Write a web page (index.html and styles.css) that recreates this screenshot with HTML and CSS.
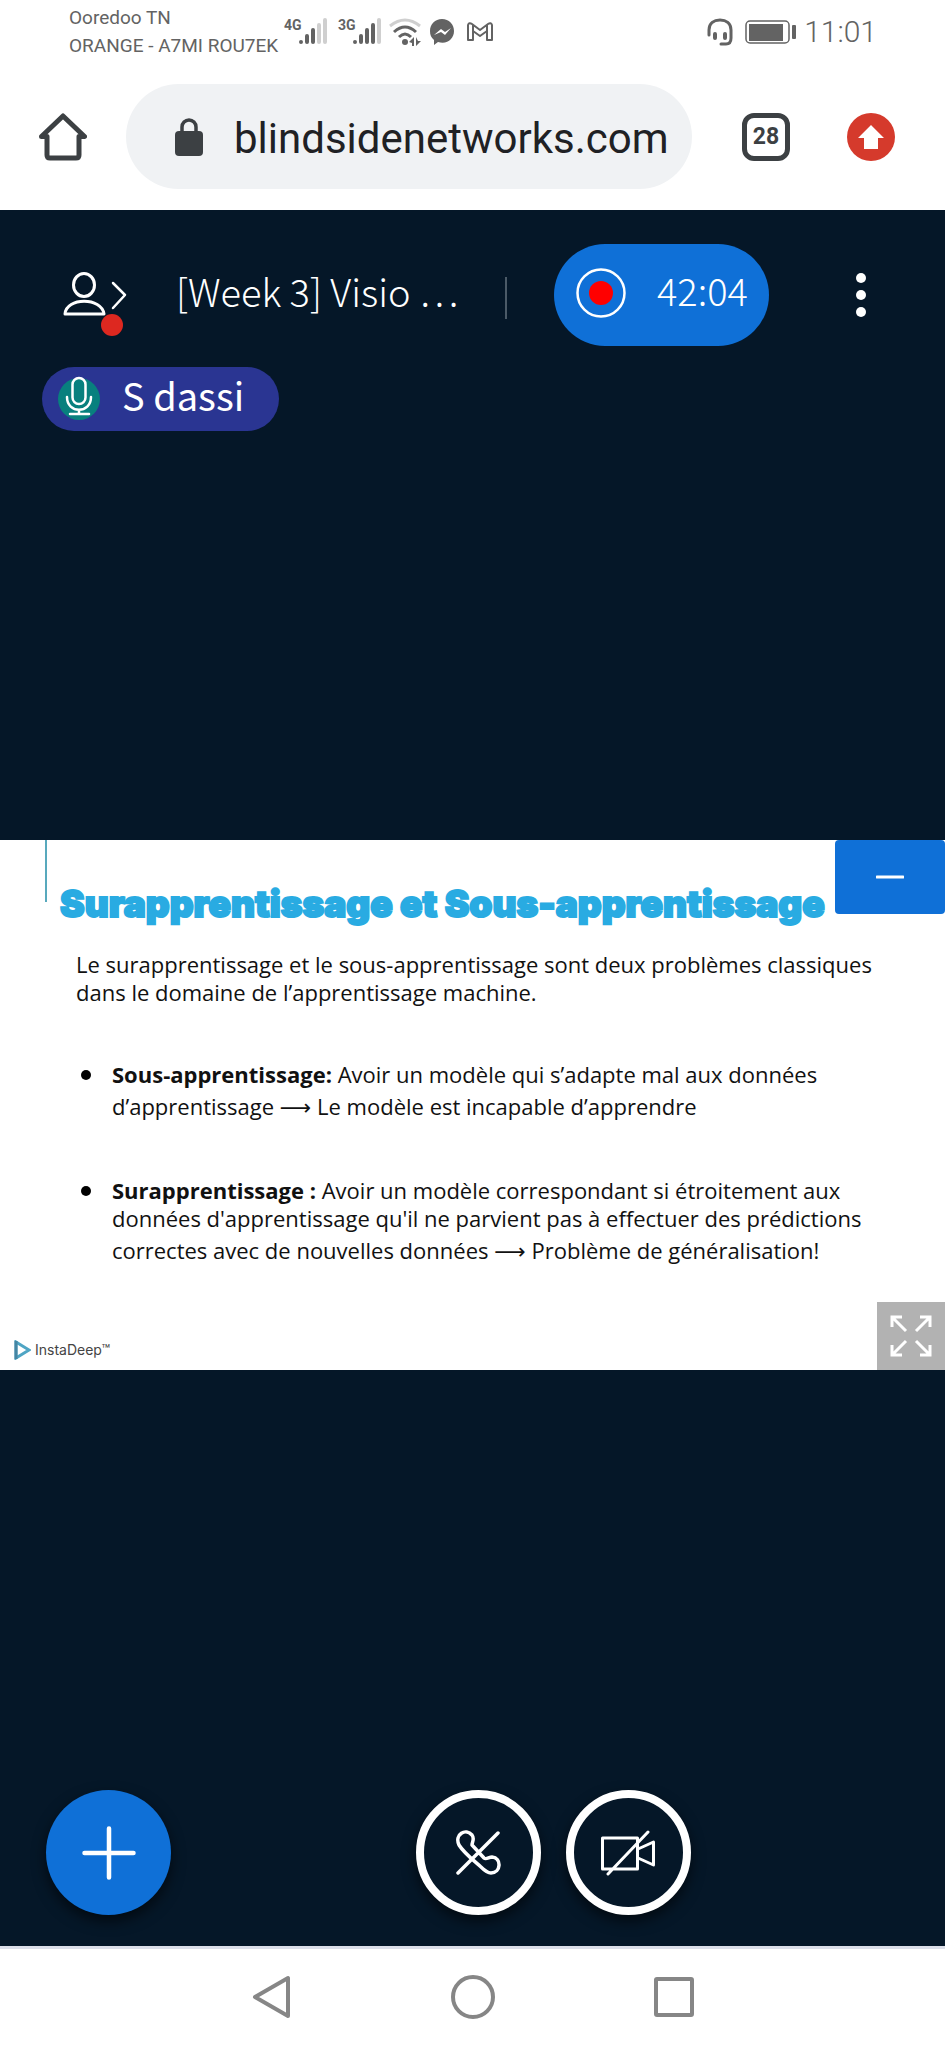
FILE: index.html
```html
<!DOCTYPE html>
<html lang="fr">
<head>
<meta charset="utf-8">
<meta name="viewport" content="width=device-width, initial-scale=1">
<title>[Week 3] Visio</title>
<link rel="stylesheet" href="styles.css">
</head>
<body>
<div class="status">
  <div class="carriers"><span>Ooredoo TN</span><span>ORANGE - A7MI ROU7EK</span></div>
  <div class="signals">
    <span class="net">4G</span>
    <svg class="bars" width="28" height="28" viewBox="0 0 28 28" aria-hidden="true"><g stroke-width="4" stroke-linecap="round" stroke="#636363"><path d="M2 24v0M8 18v6M14 12v12"/><path stroke="#cfcfcf" d="M20 7v17M26 2v22"/></g></svg>
    <span class="net second">3G</span>
    <svg class="bars" width="28" height="28" viewBox="0 0 28 28" aria-hidden="true"><g stroke-width="4" stroke-linecap="round" stroke="#636363"><path d="M2 24v0M8 18v6M14 12v12M20 7v17"/><path stroke="#cfcfcf" d="M26 2v22"/></g></svg>
    <svg class="wifi" width="32" height="28" viewBox="0 0 32 28" fill="none" stroke="#636363" stroke-width="3" aria-hidden="true"><path stroke="#cfcfcf" d="M1 8Q16-4 31 8"/><path d="M5 14Q16 4 27 14M10 19Q16 13 22 19"/><circle cx="16" cy="24" r="3" fill="#636363" stroke="none"/><path fill="#636363" stroke="none" d="M20 24l5-5v9h-2v-3zM27 19v9l5-5h-3z"/></svg>
    <svg class="msgr" width="26" height="26" viewBox="0 0 26 26" aria-hidden="true"><path fill="#636363" d="M13 0C6 0 1 5 1 12c0 4 1 6 4 9v5l4-3c9 3 16-3 16-11C25 5 20 0 13 0z"/><path d="M5 16l7-6 4 3 6-4-6 7-4-3z" fill="#fff"/></svg>
    <svg class="gmail" width="26" height="20" viewBox="0 0 26 20" fill="none" stroke="#636363" stroke-width="2" stroke-linejoin="round" aria-hidden="true"><path d="M1 18V3q1-3 4-1l8 6 8-6q3-2 4 1v15h-5V9l-7 5-7-5v9zM6 9V3M20 9V3"/></svg>
  </div>
  <div class="right-status">
    <svg width="26" height="28" viewBox="0 0 26 28" fill="none" stroke="#636363" stroke-width="3" stroke-linecap="round" aria-hidden="true"><path d="M2 17v-5C2 5 7 2 13 2s11 3 11 10v8c0 4-2 6-5 6h-5"/><path stroke-width="4" d="M8 16v4M18 16v4"/></svg>
    <svg class="battery" width="51" height="24" viewBox="0 0 51 24" aria-hidden="true"><rect x="1" y="1" width="43" height="22" rx="4" fill="none" stroke="#636363" stroke-width="1.5"/><path fill="#636363" d="M4 4h34v17H4z"/><rect x="47" y="5" width="4" height="14" rx="1" fill="#636363"/></svg>
    <time>11:01</time>
  </div>
</div>

<header class="browser">
  <button class="plain" aria-label="Accueil"><svg width="48" height="48" viewBox="0 0 48 48" fill="none" stroke="#3c4043" stroke-width="5" stroke-linejoin="round" stroke-linecap="round"><path d="M2.500 23.500L24 3l21.500 20.500H40V42q0 3-3 3H11q-3 0-3-3V23.500z"/></svg></button>
  <label class="omnibox">
    <svg width="28" height="38" viewBox="0 0 28 38" aria-hidden="true"><rect y="13" width="28" height="25" rx="4" fill="#3c4043"/><path d="M7 15V9a7 7 0 0114 0v6" fill="none" stroke="#3c4043" stroke-width="3.500"/></svg>
    <input type="text" value="blindsidenetworks.com" aria-label="Adresse">
  </label>
  <button class="tabs" aria-label="28 onglets">28</button>
  <button class="plain" aria-label="Mettre à jour"><svg width="48" height="48" viewBox="0 0 48 48"><circle cx="24" cy="24" r="24" fill="#d53a2c"/><path fill="#fff" d="M24 12l13 13h-6v11H17V25h-6z"/></svg></button>
</header>

<main class="meeting">
  <div class="topbar">
    <button class="plain users" aria-label="Participants"><svg width="66" height="48" viewBox="0 0 66 48" fill="none" stroke="#fff" stroke-width="3" stroke-linecap="round" stroke-linejoin="round"><ellipse cx="22" cy="14" rx="10.500" ry="11.500"/><path d="M3 43c1-17 37-17 39 0z"/><path stroke-width="2.500" d="M51 12l12 12-12 13"/></svg><span class="badge"></span></button>
    <h1 class="title">[Week 3] Visio …</h1>
    <span class="divider"></span>
    <button class="record"><svg width="50" height="50" viewBox="0 0 50 50" aria-hidden="true"><circle cx="25" cy="25" r="23.500" fill="none" stroke="#fff" stroke-width="2.500"/><circle cx="25" cy="25" r="12" fill="#f00"/></svg><span class="label">42:04</span></button>
    <button class="plain more" aria-label="Options"><svg width="10" height="44" viewBox="0 0 10 44" fill="#fff"><circle cx="5" cy="5" r="5"/><circle cx="5" cy="22" r="5"/><circle cx="5" cy="39" r="5"/></svg></button>
  </div>
  <button class="talker"><svg width="42" height="44" viewBox="0 0 42 44" fill="none" stroke="#fff" stroke-width="2.500" stroke-linecap="round" aria-hidden="true"><circle cx="21" cy="23" r="21" fill="#08807e" stroke="none"/><rect x="14.500" y="2" width="13" height="26" rx="6.500"/><path d="M9 21c0 17 24 17 24 0M21 34v4M12 38h19"/></svg><span class="label">S dassi</span></button>

  <div class="stage">
    <section class="slide">
      <span class="rule"></span>
      <h2>Surapprentissage et Sous-apprentissage</h2>
      <p>Le surapprentissage et le sous-apprentissage sont deux problèmes classiques<br>dans le domaine de l’apprentissage machine.</p>
      <ul>
        <li><b>Sous-apprentissage:</b> Avoir un modèle qui s’adapte mal aux données<br>d’apprentissage <span class="arrow">⟶</span> Le modèle est incapable d’apprendre</li>
        <li><b>Surapprentissage :</b> Avoir un modèle correspondant si étroitement aux<br>données d'apprentissage qu'il ne parvient pas à effectuer des prédictions<br>correctes avec de nouvelles données <span class="arrow">⟶</span> Problème de généralisation!</li>
      </ul>
      <div class="brand"><svg width="17" height="20" viewBox="0 0 17 20" aria-hidden="true"><path d="M2 2l13 8-13 8z" fill="none" stroke="#4fa5c4" stroke-width="3"/><path d="M2 1v18" stroke="#4585a3" stroke-width="3"/></svg>InstaDeep™</div>
      <button class="minimize" aria-label="Réduire la présentation"><svg width="28" height="4" viewBox="0 0 28 4"><path d="M1 2h26" stroke="#fff" stroke-width="3" stroke-linecap="round"/></svg></button>
      <button class="fullscreen" aria-label="Plein écran"><svg width="42" height="42" viewBox="0 0 42 42" fill="none" stroke="#fff" stroke-width="3"><path d="M16 16L2 2M2 12V2h10M26 16L40 2M30 2h10v10M16 26L2 40M2 30v10h10M26 26l14 14M30 40h10V30"/></svg></button>
    </section>
  </div>

  <div class="actions">
    <button class="round add" aria-label="Actions"><svg width="54" height="54" viewBox="0 0 54 54" stroke="#fff" stroke-width="4.500" stroke-linecap="round"><path d="M27 2.500v49M2.500 27h49"/></svg></button>
    <div class="center">
      <button class="round ring" aria-label="Rejoindre l’audio"><svg width="46" height="46" viewBox="0 0 46 46" fill="none" stroke="#fff" stroke-width="3.500" stroke-linecap="round" stroke-linejoin="round"><path d="M43 3L3 43M4 15C-1 4 11-2 17 5c3 4 0 7 0 10l12 13c2 2 5-1 8-1 10 1 9 16-1 16-4 0-7-3-10-6C17 29 9 23 4 15z"/></svg></button>
      <button class="round ring" aria-label="Partager la webcam"><svg width="56" height="46" viewBox="0 0 56 46" fill="none" stroke="#fff" stroke-width="3" stroke-linecap="round" stroke-linejoin="round"><path d="M2.500 8h35v31h-35zM38 19l15.500-7v23L38 28M48 2L8 44"/></svg></button>
    </div>
  </div>
</main>

<nav class="system">
  <button class="plain" aria-label="Retour"><svg width="44" height="44" viewBox="0 0 44 44"><path d="M5 22L38 3v38z"/></svg></button>
  <button class="plain" aria-label="Écran d’accueil"><svg width="44" height="44" viewBox="0 0 44 44"><circle cx="22" cy="22" r="20"/></svg></button>
  <button class="plain" aria-label="Applications récentes"><svg width="44" height="44" viewBox="0 0 44 44"><rect x="4" y="4" width="36" height="36" rx="1"/></svg></button>
</nav>
</body>
</html>
```
FILE: styles.css
```css
* { box-sizing: border-box; }
body {
  margin: 0;
  min-height: 100vh;
  display: flex;
  flex-direction: column;
  background: #fff;
  font-family: Roboto, "Liberation Sans", sans-serif;
}
svg { display: block; flex: none; }
button { font: inherit; color: inherit; border: 0; padding: 0; cursor: pointer; }
.plain { background: none; }

.status {
  display: flex;
  align-items: center;
  height: 64px;
  padding: 0 68px 0 69px;
  color: #636363;
}
.carriers { display: flex; flex-direction: column; font-size: 19px; line-height: 28px; width: 215px; white-space: nowrap; font-weight: 400; }
.signals { display: flex; align-items: center; }
.net { width: 15px; font-size: 14px; line-height: 14px; font-weight: 700; align-self: flex-start; white-space: nowrap; }
.second { margin-left: 11px; }
.wifi { margin-left: 8px; }
.msgr { margin-left: 8px; }
.gmail { margin-left: 12px; }
.right-status { display: flex; align-items: center; margin-left: auto; font-size: 30px; line-height: 36px; font-weight: 300; }
.battery { margin: 0 8px 0 12px; }

.browser { display: flex; align-items: center; padding: 20px 50px 21px 39px; }
.omnibox {
  flex: 1;
  min-width: 0;
  display: flex;
  align-items: center;
  gap: 31px;
  height: 105px;
  margin: 0 50px 0 39px;
  padding: 0 24px 0 49px;
  border-radius: 53px;
  background: #f0f2f4;
}
.omnibox input {
  flex: 1;
  min-width: 0;
  border: 0;
  padding: 4px 0 0;
  outline: 0;
  background: none;
  font: 42px/52px Roboto, sans-serif;
  color: #202124;
}
.tabs {
  width: 48px;
  height: 48px;
  margin-right: 57px;
  border: 5px solid #3c4043;
  border-radius: 12px;
  background: #fff;
  color: #3c4043;
  font-size: 23px;
  line-height: 38px;
  font-weight: 700;
}

.meeting {
  flex: 1;
  display: flex;
  flex-direction: column;
  background: #051728;
  color: #fff;
  font-family: "Noto Sans CJK SC", "Noto Sans", sans-serif;
}
.topbar { display: flex; align-items: center; padding: 34px 79px 0 62px; }
.users { position: relative; }
.badge {
  position: absolute;
  left: 39px;
  bottom: -17px;
  width: 22px;
  height: 22px;
  border-radius: 50%;
  background: #dd2820;
}
.title { flex: 1; margin: 0 0 0 48px; padding-bottom: 8px; font-size: 38px; line-height: 48px; font-weight: 300; white-space: nowrap; }
.label { padding-bottom: 6px; line-height: 48px; }
.divider { width: 2px; height: 42px; margin: 6px 47px 0 0; background: #4b5a67; }
.record {
  display: flex;
  align-items: center;
  gap: 31px;
  height: 102px;
  width: 215px;
  padding: 0 0 4px 22px;
  border-radius: 51px;
  background: #0f70d7;
  font-size: 38px;
  font-weight: 300;
}
.more { margin-left: 87px; }
.talker {
  align-self: flex-start;
  display: flex;
  align-items: center;
  gap: 22px;
  height: 64px;
  margin: 21px 0 0 42px;
  padding: 0 35px 3px 16px;
  border-radius: 32px;
  background: #2a3592;
  font-size: 38px;
}

.stage { flex: 1; display: flex; flex-direction: column; justify-content: center; }
.slide {
  position: relative;
  padding: 44px 60px 10px;
  background: #fff;
  color: #111;
  font-family: "Open Sans", "Noto Sans", sans-serif;
  font-size: 22px;
  line-height: 28px;
}
.rule { position: absolute; left: 45px; top: 0; width: 2px; height: 62px; background: #58a9bd; }
.slide h2 {
  margin: 0;
  font: 900 37px/40px Inter, sans-serif;
  color: #29abe2;
  -webkit-text-stroke: 2px #29abe2;
  white-space: nowrap;
}
.slide p { margin: 26px 0 0 16px; white-space: nowrap; }
.slide ul { margin: 0; padding: 0 0 0 52px; list-style: none; white-space: nowrap; }
.slide li { position: relative; margin-top: 54px; }
.slide li + li { margin-top: 48px; }
.slide li::before {
  content: "";
  position: absolute;
  left: -31px;
  top: 10px;
  width: 10px;
  height: 10px;
  border-radius: 50%;
  background: #000;
}
.arrow { font-family: "DejaVu Sans", sans-serif; line-height: 40px; }
.brand {
  display: flex;
  align-items: center;
  gap: 4px;
  margin: 68px 0 0 -46px;
  font: 14px/20px Inter, sans-serif;
  color: #444;
}
.minimize {
  position: absolute;
  top: 0;
  right: 0;
  width: 110px;
  height: 74px;
  display: grid;
  place-items: center;
  border-radius: 4px;
  background: #0f70d7;
}
.fullscreen {
  position: absolute;
  right: 0;
  bottom: 0;
  width: 68px;
  height: 68px;
  display: grid;
  place-items: center;
  background: #b2b2b2;
}

.actions { display: flex; align-items: center; padding: 11px 10px 31px 46px; }
.center { flex: 1; display: flex; justify-content: center; gap: 25px; }
.round {
  width: 125px;
  height: 125px;
  display: grid;
  place-items: center;
  border-radius: 50%;
  box-shadow: 0 6px 14px rgba(0, 0, 0, .6);
}
.add { background: #0f70d7; }
.ring { background: #051728; border: 8px solid #fff; }

.system {
  display: flex;
  justify-content: center;
  align-items: center;
  gap: 157px;
  height: 102px;
  padding-bottom: 3px;
  border-top: 3px solid #dcdfe9;
}
.system svg { fill: none; stroke: #868686; stroke-width: 4; stroke-linejoin: round; }
```
